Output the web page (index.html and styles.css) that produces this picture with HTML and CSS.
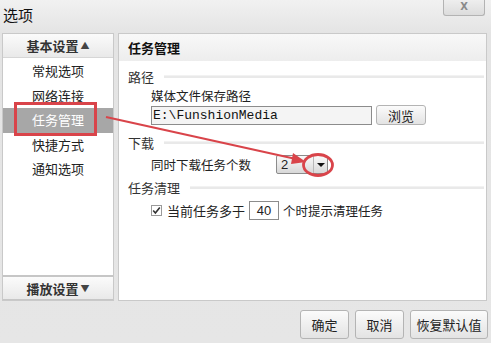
FILE: index.html
```html
<!DOCTYPE html>
<html>
<head>
<meta charset="utf-8">
<link rel="stylesheet" href="styles.css">
</head>
<body>
<div class="window">
  <div class="titlebar">
    <div class="title">选项</div>
    <div class="close">X</div>
  </div>
  <div class="main">
    <div class="sidebar">
      <div class="side-head">基本设置<span class="tri">▲</span></div>
      <div class="side-items">
        <div class="item">常规选项</div>
        <div class="item">网络连接</div>
        <div class="item selected">任务管理</div>
        <div class="item">快捷方式</div>
        <div class="item">通知选项</div>
      </div>
      <div class="side-foot">播放设置<span class="tri">▼</span></div>
    </div>
    <div class="panel">
      <div class="panel-head">任务管理</div>
      <div class="panel-body">
        <div class="group"><span>路径</span><div class="rule"></div></div>
        <div class="sub label">媒体文件保存路径</div>
        <div class="sub row">
          <div class="path-input">E:\FunshionMedia</div>
          <div class="btn small">浏览</div>
        </div>
        <div class="group g2"><span>下载</span><div class="rule"></div></div>
        <div class="sub row r2">
          <span class="lbl">同时下载任务个数</span>
          <div class="select"><span class="val">2</span><span class="arrow"></span></div>
        </div>
        <div class="group g3"><span>任务清理</span><div class="rule"></div></div>
        <div class="sub row r3">
          <span class="check">
            <svg width="11" height="11" viewBox="0 0 11 11"><rect x="0.5" y="0.5" width="10" height="10" fill="#fff" stroke="#9a9a9a"/><path d="M2.2 5.4 L4.4 8 L8.8 2.4" fill="none" stroke="#333" stroke-width="1.6"/></svg>
          </span>
          <span class="lbl l3">当前任务多于</span>
          <div class="num">40</div>
          <span class="lbl">个时提示清理任务</span>
        </div>
      </div>
    </div>
  </div>
  <div class="footer">
    <div class="btn b1">确定</div>
    <div class="btn b1">取消</div>
    <div class="btn b2">恢复默认值</div>
  </div>
  <svg class="annot" width="491" height="343" viewBox="0 0 491 343">
    <rect x="15.5" y="103.5" width="80" height="31" fill="none" stroke="#d9444a" stroke-width="3"/>
    <line x1="106" y1="117" x2="296" y2="159" stroke="#d9444a" stroke-width="2.2"/>
    <polygon points="306,162 293,153 291,164" fill="#d9444a"/>
    <ellipse cx="318" cy="165" rx="14.5" ry="10.5" fill="none" stroke="#d9444a" stroke-width="2.8"/>
  </svg>
</div>
</body>
</html>
```
FILE: styles.css
```css
* { box-sizing: border-box; }
html, body { margin: 0; padding: 0; }
body {
  width: 491px; height: 343px; overflow: hidden;
  background: #e6e6e6;
  font-family: "Noto Sans CJK SC", "DejaVu Sans", sans-serif;
  font-size: 12px; color: #222;
}
.window { position: relative; width: 491px; height: 343px; display: flex; flex-direction: column;
  background: linear-gradient(#f1f1f1 0px, #e4e4e4 33px, #e6e6e6 100%); }
.titlebar { height: 33px; display: flex; justify-content: space-between; align-items: flex-start; padding: 0 6px 0 3px; }
.title { font-size: 15px; line-height: 15px; margin-top: 7px; color: #111; }
.close { width: 42px; height: 16px; border: 1px solid #b3b3b3; border-top: none; border-radius: 0 0 3px 3px;
  background: linear-gradient(#eeeeee, #dcdcdc); color: #8a8a8a; font-family: "DejaVu Sans", sans-serif;
  font-weight: bold; font-size: 10px; text-align: center; line-height: 14px; }
.main { height: 268px; display: flex; gap: 4px; padding: 0 4px 0 2px; }
.sidebar { width: 112px; display: flex; flex-direction: column; background: #fff; border: 1px solid #c9c9c9; }
.side-head, .side-foot { height: 24px; display: flex; align-items: center; justify-content: center;
  background: linear-gradient(#fbfbfb, #e9e9e9); font-weight: bold; font-size: 13px; color: #333; }
.side-head { border-bottom: 1px solid #d6d6d6; }
.side-foot { border-top: 2px solid #c6c6c6; border-bottom: 1px solid #c6c6c6; height: 25px; }
.tri { font-size: 9px; margin-left: 2px; color: #444; }
.side-items { flex: 1; display: flex; flex-direction: column; padding-top: 1px; }
.item { height: 24.5px; line-height: 24px; text-align: center; font-size: 13px; color: #222; }
.item.selected { background: #a7a7a7; color: #fff; }
.panel { flex: 1; background: #fff; border: 1px solid #c9c9c9; display: flex; flex-direction: column; }
.panel-head { height: 27px; padding-left: 9px; display: flex; align-items: center; font-weight: bold; font-size: 13px;
  background: linear-gradient(#f8f8f8, #ededed); color: #111; }
.panel-body { padding: 6px 2px 0 9px; display: flex; flex-direction: column; }
.group { height: 18px; display: flex; align-items: center; gap: 10px; color: #333; font-size: 13px; }
.rule { flex: 1; height: 3px; background: #e9e9e9; border-top: 1px solid #f2f2f2; }
.sub { padding-left: 23px; }
.label { margin-top: 3px; height: 16px; line-height: 16px; font-size: 12.5px; }
.row { display: flex; align-items: center; }
.path-input { margin-top: 2px; width: 221px; height: 19px; border: 1px solid #8c8c8c; background: #f4f4f4;
  font-family: "Liberation Mono", monospace; font-size: 13px; line-height: 17px; padding-left: 1px; color: #111; }
.btn { display: flex; align-items: center; justify-content: center; border: 1px solid #b4b4b4; border-radius: 3px;
  background: linear-gradient(#fbfbfb, #e3e3e3); color: #222; }
.btn.small { margin-left: 4px; margin-top: 1px; width: 50px; height: 20px; font-size: 13px; }
.g2 { margin-top: 8px; }
.r2 { margin-top: 4px; height: 18px; }
.lbl { font-size: 12.5px; }
.select { margin-left: 25px; width: 52px; height: 19px; border: 1px solid #8c8c8c; border-radius: 2px;
  background: linear-gradient(#fafafa, #d8d8d8); display: flex; align-items: center; }
.val { flex: 1; padding-left: 4px; font-family: "Liberation Sans", sans-serif; font-size: 13px; }
.arrow { width: 14px; height: 100%; border-left: 1px solid #b8b8b8; position: relative; }
.arrow::after { content: ""; position: absolute; left: 3px; top: 7px; border-left: 4px solid transparent;
  border-right: 4px solid transparent; border-top: 4px solid #111; }
.g3 { margin-top: 5px; }
.r3 { margin-top: 5px; height: 19px; }
.check { display: flex; margin-right: 5px; }
.l3 { font-size: 13px; }
.num { margin: 0 4px 0 4px; width: 30px; height: 19px; border: 1px solid #8c8c8c; text-align: center;
  font-family: "Liberation Sans", sans-serif; font-size: 13px; line-height: 17px; }
.footer { flex: 1; display: flex; justify-content: flex-end; align-items: flex-start; gap: 6px; padding: 9px 3px 0 0; }
.btn.b1 { width: 49px; height: 29px; font-size: 13px; }
.btn.b2 { width: 78px; height: 29px; font-size: 13px; }
.annot { position: absolute; left: 0; top: 0; pointer-events: none; }
```
